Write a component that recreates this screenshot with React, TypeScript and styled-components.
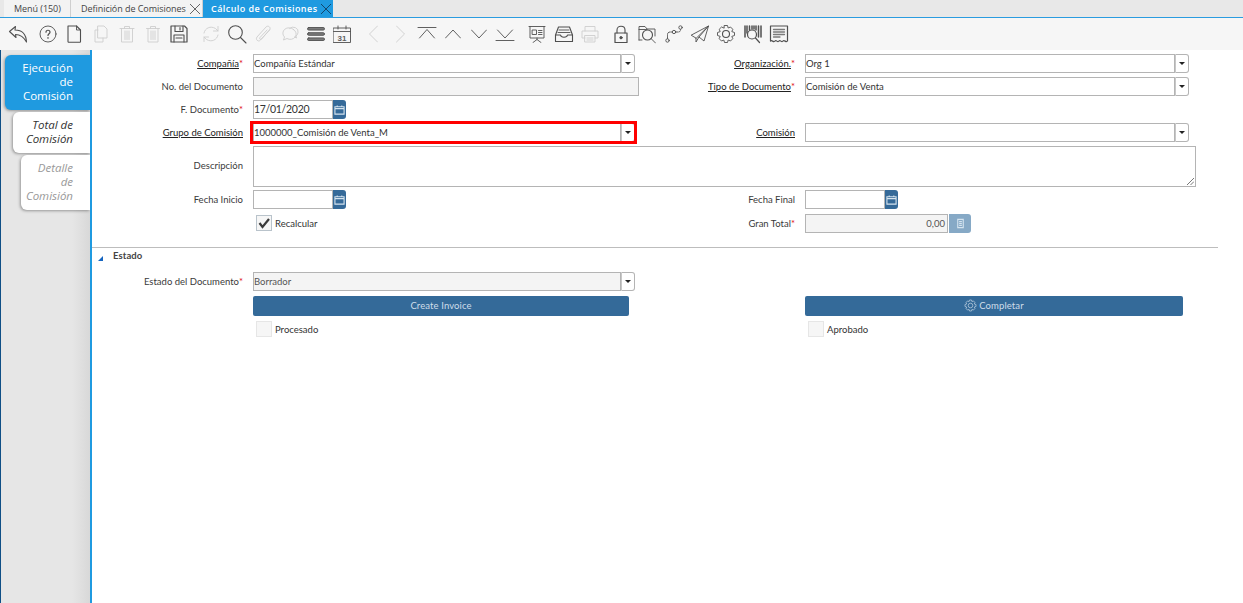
import * as React from "react";
import styled, { createGlobalStyle } from "styled-components";

const GlobalStyle = createGlobalStyle`
  html, body {
    margin: 0;
    padding: 0;
    background: #fff;
  }
  body {
    font-family: Lato, "Open Sans", sans-serif;
    color: #333;
  }
`;

const Page = styled.div`
  width: 1243px;
  height: 603px;
  display: flex;
  flex-direction: column;
  overflow: hidden;
`;

const TabStrip = styled.div`
  height: 17px;
  display: flex;
  padding-left: 4px;
  background: #e8e8e8;
  border-bottom: 1px solid #2a9ce0;
`;

const DocTab = styled.div<{ $active?: boolean; $width: number }>`
  width: ${(p) => p.$width}px;
  box-sizing: border-box;
  display: flex;
  align-items: center;
  justify-content: space-between;
  padding: 0 0 0 ${(p) => (p.$active ? 8 : 10)}px;
  font-family: "Open Sans", sans-serif;
  font-size: 9px;
  white-space: nowrap;
  letter-spacing: ${(p) => (p.$active ? 0.45 : -0.05)}px;
  font-weight: ${(p) => (p.$active ? 600 : 400)};
  color: ${(p) => (p.$active ? "#fff" : "#444")};
  background: ${(p) => (p.$active ? "#1f9ae0" : "#f3f3f3")};
  border-right: ${(p) => (p.$active ? "0" : "1px solid #cfcfcf")};
`;

const Close = styled.svg<{ $dark?: boolean }>`
  width: 12px;
  height: 12px;
  flex: none;
  margin-right: 1px;
  stroke: ${(p) => (p.$dark ? "#12476e" : "#666")};
  stroke-width: 1;
  fill: none;
`;

const Toolbar = styled.div`
  height: 32px;
  display: flex;
  align-items: center;
  padding-left: 5px;
  background: #f6f6f6;
`;

const Tool = styled.div<{ $dim?: boolean; $gap?: number }>`
  width: 26.3px;
  height: 26px;
  margin-left: ${(p) => p.$gap ?? 0}px;
  display: flex;
  align-items: center;
  justify-content: center;
  opacity: ${(p) => (p.$dim ? 0.2 : 0.85)};

  svg {
    width: 20px;
    height: 20px;
    fill: none;
    stroke: #333;
    stroke-width: 0.9;
    stroke-linecap: round;
    stroke-linejoin: round;
  }
`;

const Body = styled.div`
  flex: 1;
  display: flex;
  min-height: 0;
`;

const Sidebar = styled.div`
  width: 90px;
  box-sizing: border-box;
  flex: none;
  padding: 5px 0 0 0;
  display: flex;
  flex-direction: column;
  align-items: flex-end;
  gap: 2px;
  background: linear-gradient(90deg, #e6e6e6 80%, #d8d8d8 100%);
  border-left: 1px solid #0f4f86;
`;

const SideTab = styled.div<{ $state: "active" | "open" | "idle"; $width: number; $height: number }>`
  width: ${(p) => p.$width}px;
  height: ${(p) => p.$height}px;
  box-sizing: border-box;
  padding: 0 17px 2px 0;
  display: flex;
  align-items: center;
  justify-content: flex-end;
  text-align: right;
  font-family: "Open Sans", sans-serif;
  font-size: 11.5px;
  line-height: 14px;
  border-radius: 6px 0 0 6px;
  font-style: ${(p) => (p.$state === "active" ? "normal" : "italic")};
  color: ${(p) => (p.$state === "active" ? "#fff" : p.$state === "open" ? "#333" : "#999")};
  background: ${(p) => (p.$state === "active" ? "#1f9ae0" : "#fff")};
  box-shadow: -1px 1px 3px rgba(0, 0, 0, 0.35);
`;

const Main = styled.div`
  flex: 1;
  box-sizing: border-box;
  padding: 4px 25px 0 0;
  background: #fff;
  border-left: 2px solid #1f9ae0;
`;

const FormGrid = styled.div<{ $rows: string }>`
  display: grid;
  grid-template-columns: 161px 391px 161px 393px;
  grid-template-rows: ${(p) => p.$rows};
`;

const Label = styled.div<{ $top?: boolean }>`
  box-sizing: border-box;
  height: 18px;
  padding-right: 10px;
  display: flex;
  align-items: center;
  justify-content: flex-end;
  font-size: 9.5px;
  color: #3a3a3a;
  margin-top: ${(p) => (p.$top ? 10 : 0)}px;
`;

const LinkText = styled.span`
  color: #222;
  text-decoration: underline;
`;

const Req = styled.span`
  color: #e0101a;
`;

const Field = styled.div<{ $width: number }>`
  position: relative;
  width: ${(p) => p.$width}px;
  height: 18px;
  display: flex;
`;

const Input = styled.div<{ $disabled?: boolean; $right?: boolean; $big?: boolean }>`
  flex: 1;
  min-width: 0;
  box-sizing: border-box;
  height: 19px;
  padding: 0 ${(p) => (p.$right ? 2 : 0)}px 1px;
  display: flex;
  align-items: center;
  justify-content: ${(p) => (p.$right ? "flex-end" : "flex-start")};
  font-size: ${(p) => (p.$big ? 10.5 : 9.5)}px;
  letter-spacing: ${(p) => (p.$big ? -0.3 : 0)}px;
  color: ${(p) => (p.$disabled ? "#555" : "#333")};
  background: ${(p) => (p.$disabled ? "#f4f4f4" : "#fff")};
  border: 1px solid #b4b4b4;
`;

const DropButton = styled.div`
  width: 14px;
  height: 19px;
  box-sizing: border-box;
  flex: none;
  display: flex;
  align-items: center;
  justify-content: center;
  background: #fff;
  border: 1px solid #b4b4b4;
  border-left: 1px solid #c8c8c8;
  border-radius: 0 3px 3px 0;

  &::after {
    content: "";
    border-top: 3px solid #222;
    border-left: 3px solid transparent;
    border-right: 3px solid transparent;
  }
`;

const BlueSquare = styled.div<{ $faded?: boolean }>`
  width: ${(p) => (p.$faded ? 22 : 13)}px;
  height: 19px;
  flex: none;
  margin-left: ${(p) => (p.$faded ? 1 : 0)}px;
  display: flex;
  align-items: center;
  justify-content: center;
  background: ${(p) => (p.$faded ? "#86a9c6" : "#356a99")};
  border-radius: 0 3px 3px 0;

  svg {
    width: 11px;
    height: 11px;
    fill: none;
    stroke: #d5e4ef;
    stroke-width: 1.2;
  }
`;

const Highlight = styled.div`
  position: absolute;
  left: -3px;
  right: -2px;
  top: -2px;
  bottom: -3px;
  border: 3px solid #ff0000;
  pointer-events: none;
`;

const Area = styled.div`
  position: relative;
  width: 943px;
  height: 41px;
  box-sizing: border-box;
  border: 1px solid #b4b4b4;
  background: #fff;
  grid-column: 2 / 5;

  svg {
    position: absolute;
    right: 1px;
    bottom: 1px;
    width: 7px;
    height: 7px;
    stroke: #555;
    stroke-width: 0.8;
  }
`;

const CheckRow = styled.div`
  display: flex;
  align-items: center;
  gap: 3px;
  padding-left: 3px;
  height: 18px;
  font-size: 9.5px;
  color: #333;
`;

const Check = styled.div<{ $on?: boolean }>`
  width: 16px;
  height: 16px;
  box-sizing: border-box;
  display: flex;
  align-items: center;
  justify-content: center;
  background: #f6f6f6;
  border: 1px solid ${(p) => (p.$on ? "#b9c3cb" : "#e6e6e6")};

  svg {
    width: 14px;
    height: 14px;
    fill: none;
    stroke: #3b3b3b;
    stroke-width: 2.2;
  }
`;

const Divider = styled.div`
  height: 1px;
  background: #bdbdbd;
`;

const SectionHead = styled.div`
  height: 24px;
  box-sizing: border-box;
  padding: 1px 0 0 6px;
  display: flex;
  align-items: flex-start;
  gap: 10px;
  font-size: 9.5px;
  line-height: 14px;
  font-weight: 700;
  letter-spacing: 0.1px;
  color: #444;

  &::before {
    content: "";
    margin-top: 7px;
    border-bottom: 5px solid #1565c0;
    border-left: 5px solid transparent;
  }
`;

const ActionButton = styled.div<{ $width: number }>`
  width: ${(p) => p.$width}px;
  height: 20px;
  box-sizing: border-box;
  padding-bottom: 1px;
  display: flex;
  align-items: center;
  justify-content: center;
  gap: 2px;
  font-size: 9.5px;
  letter-spacing: 0.1px;
  color: #cfdde9;
  background: #346a99;
  border-radius: 2px;

  svg {
    width: 13px;
    height: 13px;
    fill: none;
    stroke: #cfdde9;
    stroke-width: 1;
  }
`;

const icons: { dim?: boolean; gap?: number; draw: React.ReactNode }[] = [
  { draw: <path d="M1.5 7.5 7.5 2.5 7 6C12.5 6 18 9 18.5 18 15.5 12.5 12 10.5 7.5 10.5L8 13.5Z" strokeWidth="1.1" /> },
  { gap: 3.5, draw: <><circle cx="10" cy="10" r="8" /><path d="M8 8.2C8 5.6 12 5.6 12 8.2 12 9.8 10 9.8 10 11.5" strokeWidth="1.2" /><path d="M10 13.6v.6" strokeWidth="1.3" /></> },
  { draw: <><path d="M4 2H12.5L16.5 6V17.5a.8.8 0 0 1-.8.8H4.8a.8.8 0 0 1-.8-.8Z" strokeWidth="1.1" /><path d="M12.5 2V6H16.5" /></> },
  { dim: true, draw: <><path d="M7 2H13L16 5V14H7Z" /><path d="M7 6H4V18H12V14" /></> },
  { dim: true, draw: <><path d="M3 4.5H17M7.5 4.5V2.5H12.5V4.5M4.5 4.5V18H15.5V4.5M8 7V15.5M10 7V15.5M12 7V15.5" /></> },
  { dim: true, draw: <><path d="M3.5 4.5H16.5M7.5 4.5V2.5H12.5V4.5M5 4.5V18H15V4.5M8 7V15.5M10 7V15.5M12 7V15.5" /></> },
  { draw: <><path d="M2 2H15.5L18 4.5V18H2Z" strokeWidth="1.2" /><path d="M6 2V7.5H14V2M11 3.5V6M5 18V11H15V18M7 14H13" strokeWidth="1.1" /></> },
  { dim: true, gap: 5, draw: <><path d="M3 9C4 4 9.5 1.5 14.5 4.5L17 7M17 2.5V7H12.5" /><path d="M17 11C16 16 10.5 18.5 5.5 15.5L3 13M3 17.5V13H7.5" /></> },
  { draw: <><circle cx="8.5" cy="8.5" r="6.8" strokeWidth="1.1" /><path d="M13.5 13.5 19 19" strokeWidth="1.1" /></> },
  { dim: true, draw: <path d="M16.5 6 7.5 16C5.5 18.5 2 15.5 4 13L13 3C15 .8 18.5 3.5 16.5 6L8.5 15C7.5 16 6 15 7 13.5L14 6" /> },
  { dim: true, draw: <><path d="M13.5 5.5A5 4.5 0 1 0 4.5 13L3.5 16 7 14.5A5 4.5 0 0 0 13.5 5.5Z" /><path d="M9.5 4.5A5 4.5 0 0 1 18 8.5 4.5 4.5 0 0 1 16 12L16.5 14 14.5 13" /></> },
  { draw: <><rect x="1.5" y="3.5" width="17" height="2.6" rx="1.3" fill="#666" /><rect x="1.5" y="8.7" width="17" height="2.6" rx="1.3" fill="#666" /><rect x="1.5" y="13.9" width="17" height="2.6" rx="1.3" fill="#666" /></> },
  { draw: <><path d="M1.5 4H18.5V18.5H1.5ZM1.5 7.5H18.5M6 2V5M14 2V5" /><text x="10" y="16.5" textAnchor="middle" fontSize="8" fontFamily="Liberation Sans" fontWeight="700" fill="#444" stroke="none">31</text></> },
  { dim: true, gap: 5.5, draw: <path d="M13.5 2 5.5 10 13.5 18" /> },
  { dim: true, draw: <path d="M6.5 2 14.5 10 6.5 18" /> },
  { draw: <><path d="M1 3.5H19" /><path d="M2.5 14 10 5.5 17.5 14" /></> },
  { draw: <path d="M2.5 14 10 6 17.5 14" /> },
  { draw: <path d="M2.5 6 10 14 17.5 6" /> },
  { draw: <><path d="M2.5 6 10 14 17.5 6" /><path d="M1 16.5H19" /></> },
  { gap: 5.5, draw: <><path d="M2 2.5H18M3 2.5V14H17V2.5M10 14V15.5M6 18.5 10 15.5 14 18.5" /><path d="M5.5 6H9.5V10.5H5.5ZM11.5 6.5H15M11.5 8.5H15M11.5 10.5H15" /></> },
  { draw: <><path d="M1.5 11 4.5 3H15.5L18.5 11V17.5H1.5ZM1.5 11H6.5C7 14 13 14 13.5 11H18.5" strokeWidth="1.1" /><path d="M5 6H15M4 8.5H16" /></> },
  { dim: true, draw: <><path d="M5 7V2.5H15V7M5 14H2V7H18V14H15M5 11.5H15V18H5Z" /><path d="M7 14H13M7 16H13" /></> },
  { gap: 5, draw: <><path d="M6 9V6C6 1 14 1 14 6V9" strokeWidth="1.1" /><path d="M4 9H16V18.5H4Z" strokeWidth="1.2" /><circle cx="10" cy="13.7" r="1.2" fill="#333" /></> },
  { draw: <><path d="M2 16V2.5H8L10 5H18V12M2 5.5H10" /><circle cx="10.5" cy="11" r="5" strokeWidth="1.1" /><path d="M14 14.5 18.5 19M5 16H2" /></> },
  { draw: <><circle cx="3.5" cy="16.5" r="1.7" /><circle cx="10" cy="8" r="1.7" /><circle cx="16.5" cy="3.5" r="1.7" /><path d="M3.5 14.5V10.5C3.5 9 4.5 8 6 8H8.2M11.8 8H14.5C16 8 16.5 7 16.5 5.5" strokeDasharray="2 1" /></> },
  { draw: <><path d="M1.5 11 18.5 2 14 17 9 13 6 18 6 14.5Z" /><path d="M18.5 2 6 14.5M18.5 2 9 13" /></> },
  { draw: <><path d="M8.5 1.5H11.5L12.2 4 14.5 3 16.8 5.3 15.8 7.6 18.5 8.5V11.5L15.8 12.4 16.8 14.7 14.5 17 12.2 16 11.5 18.5H8.5L7.8 16 5.5 17 3.2 14.7 4.2 12.4 1.5 11.5V8.5L4.2 7.6 3.2 5.3 5.5 3 7.8 4Z" /><circle cx="10" cy="10" r="3.5" strokeWidth="1.1" /></> },
  { draw: <><path d="M2 2V13M4 2V9M6.5 2V6M9 2V5M11 2V5M13 2V6M15.5 2V13M18 2V13" strokeWidth="1.5" /><circle cx="9" cy="10.5" r="4.5" strokeWidth="1.2" /><path d="M12.5 14 16.5 18.5" strokeWidth="1.2" /></> },
  { draw: <><path d="M1.5 2H18.5V17C17 19 15.5 15.5 14 17 12.5 19 11.5 15.5 10 17 8.5 19 7.5 15.5 6 17 4.5 19 3 15.5 1.5 17Z" strokeWidth="1.2" /><path d="M4.5 5.5H15.5M4.5 8H15.5M4.5 10.5H15.5M4.5 13H11" strokeWidth="1.3" stroke="#666" /></> },
];

const CalendarIcon = () => (
  <svg viewBox="0 0 12 12">
    <path d="M1 3H11V11H1ZM1 5H11M3.5 1.5V3M8.5 1.5V3" />
  </svg>
);

const XMark = ({ dark }: { dark?: boolean }) => (
  <Close $dark={dark} viewBox="0 0 12 12">
    <path d="M1 1 11 11M11 1 1 11" />
  </Close>
);

const Combo = ({ width, value, disabled, marked }: { width: number; value?: string; disabled?: boolean; marked?: boolean }) => (
  <Field $width={width}>
    <Input $disabled={disabled}>{value}</Input>
    <DropButton />
    {marked && <Highlight />}
  </Field>
);

const DateField = ({ value }: { value?: string }) => (
  <Field $width={93}>
    <Input $big>{value}</Input>
    <BlueSquare>
      <CalendarIcon />
    </BlueSquare>
  </Field>
);

export default function App() {
  return (
    <>
      <GlobalStyle />
      <Page>
        <TabStrip>
          <DocTab $width={67}>Menú (150)</DocTab>
          <DocTab $width={132}>
            Definición de Comisiones
            <XMark />
          </DocTab>
          <DocTab $active $width={130}>
            Cálculo de Comisiones
            <XMark dark />
          </DocTab>
        </TabStrip>
        <Toolbar>
          {icons.map((icon, i) => (
            <Tool key={i} $dim={icon.dim} $gap={icon.gap}>
              <svg viewBox="0 0 20 20">{icon.draw}</svg>
            </Tool>
          ))}
        </Toolbar>
        <Body>
          <Sidebar>
            <SideTab $state="active" $width={85} $height={55}>
              Ejecución
              <br />
              de
              <br />
              Comisión
            </SideTab>
            <SideTab $state="open" $width={77} $height={41}>
              Total de
              <br />
              Comisión
            </SideTab>
            <SideTab $state="idle" $width={69} $height={55}>
              Detalle
              <br />
              de
              <br />
              Comisión
            </SideTab>
          </Sidebar>
          <Main>
            <FormGrid $rows="23px 23px 23px 23px 44px 24px 33px">
              <Label>
                <LinkText>Compañía</LinkText>
                <Req>*</Req>
              </Label>
              <Combo width={382} value="Compañía Estándar" />
              <Label>
                <LinkText>Organización.</LinkText>
                <Req>*</Req>
              </Label>
              <Combo width={384} value="Org 1" />

              <Label>No. del Documento</Label>
              <Field $width={386}>
                <Input $disabled />
              </Field>
              <Label>
                <LinkText>Tipo de Documento</LinkText>
                <Req>*</Req>
              </Label>
              <Combo width={384} value="Comisión de Venta" />

              <Label>
                F. Documento<Req>*</Req>
              </Label>
              <DateField value="17/01/2020" />
              <div />
              <div />

              <Label>
                <LinkText>Grupo de Comisión</LinkText>
              </Label>
              <Combo width={382} value="1000000_Comisión de Venta_M" marked />
              <Label>
                <LinkText>Comisión</LinkText>
              </Label>
              <Combo width={384} />

              <Label $top>Descripción</Label>
              <Area>
                <svg viewBox="0 0 7 7">
                  <path d="M0 7 7 0M3.5 7 7 3.5" />
                </svg>
              </Area>

              <Label>Fecha Inicio</Label>
              <DateField />
              <Label>Fecha Final</Label>
              <DateField />

              <div />
              <CheckRow>
                <Check $on>
                  <svg viewBox="0 0 14 14">
                    <path d="M2.5 7 5.5 11 12 3" />
                  </svg>
                </Check>
                Recalcular
              </CheckRow>
              <Label>
                Gran Total<Req>*</Req>
              </Label>
              <Field $width={166}>
                <Input $disabled $right>
                  0,00
                </Input>
                <BlueSquare $faded>
                  <svg viewBox="0 0 12 12">
                    <path d="M3 1.5H9V10.5H3ZM4.5 4H7.5M4.5 6H7.5M4.5 8H7.5" />
                  </svg>
                </BlueSquare>
              </Field>
            </FormGrid>
            <Divider />
            <SectionHead>Estado</SectionHead>
            <FormGrid $rows="24px 24px 24px">
              <Label>
                Estado del Documento<Req>*</Req>
              </Label>
              <Combo width={382} value="Borrador" disabled />
              <div />
              <div />

              <div />
              <ActionButton $width={376}>Create Invoice</ActionButton>
              <div />
              <ActionButton $width={378}>
                <svg viewBox="0 0 20 20">
                  <path d="M8.5 1.5H11.5L12.2 4 14.5 3 16.8 5.3 15.8 7.6 18.5 8.5V11.5L15.8 12.4 16.8 14.7 14.5 17 12.2 16 11.5 18.5H8.5L7.8 16 5.5 17 3.2 14.7 4.2 12.4 1.5 11.5V8.5L4.2 7.6 3.2 5.3 5.5 3 7.8 4Z" />
                  <circle cx="10" cy="10" r="3.5" />
                </svg>
                Completar
              </ActionButton>

              <div />
              <CheckRow>
                <Check />
                Procesado
              </CheckRow>
              <div />
              <CheckRow>
                <Check />
                Aprobado
              </CheckRow>
            </FormGrid>
          </Main>
        </Body>
      </Page>
    </>
  );
}
